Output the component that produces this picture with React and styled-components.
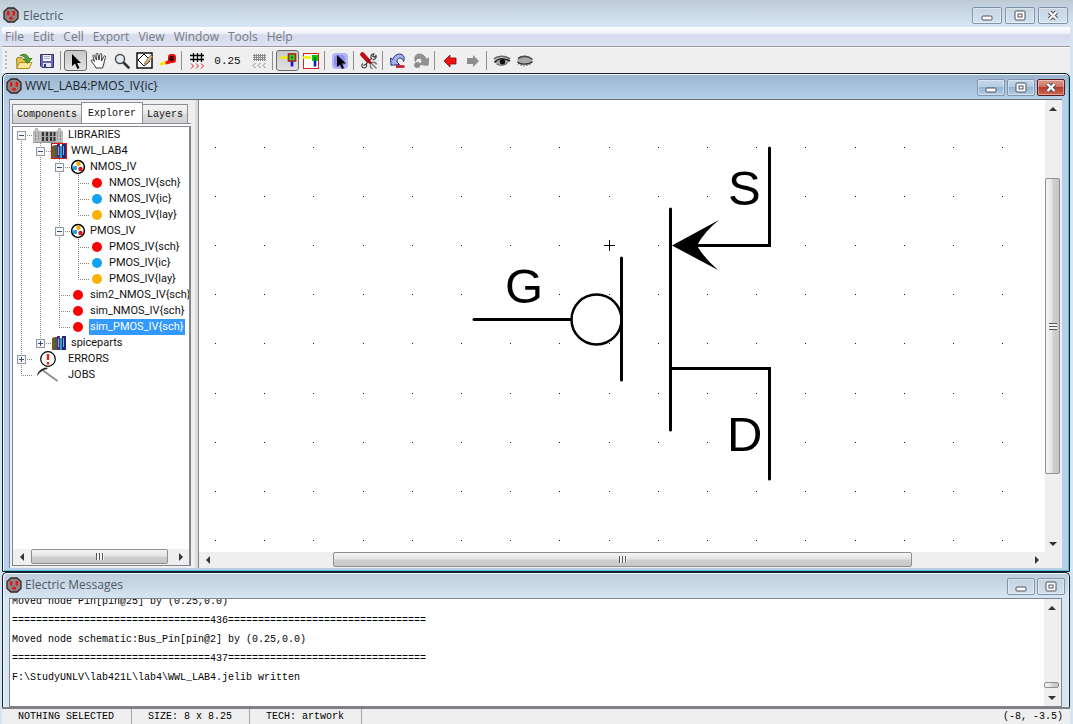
import React, { useState } from "react";
import styled, { createGlobalStyle, css } from "styled-components";

const GlobalStyle = createGlobalStyle`
  * {
    box-sizing: border-box;
  }
  body {
    margin: 0;
    font-family: "Open Sans", "Noto Sans", sans-serif;
    font-size: 12px;
  }
  button {
    font: inherit;
    color: inherit;
    padding: 0;
    margin: 0;
  }
`;

const mono = css`
  font-family: "Liberation Mono", monospace;
  font-size: 10px;
`;

const Desktop = styled.div`
  display: flex;
  flex-direction: column;
  height: 100vh;
  min-height: 480px;
  padding: 0 3px 0 2px;
  overflow: hidden;
  background: #d6e4f2;
`;

const AppTitle = styled.header`
  display: flex;
  align-items: center;
  gap: 4px;
  height: 27px;
  margin: 0 -3px 0 -2px;
  padding: 3px 5px 0 3px;
  color: #4d5a66;
  background: linear-gradient(#becbd7, #d9e7f4);
`;

const TitleText = styled.h1`
  flex: 1;
  margin: 0;
  font-size: 12px;
  font-weight: normal;
  white-space: nowrap;
`;

const MenuBar = styled.nav`
  display: flex;
  align-items: center;
  gap: 9px;
  height: 20px;
  padding: 0 3px;
  border-bottom: 1px solid #99999f;
  background: linear-gradient(#fdfeff, #f0f3f9 30%, #d5dbed 45%, #dfe3f3);
  color: #777a80;
`;

const MenuItem = styled.button`
  border: 0;
  background: none;
  line-height: 18px;
`;

const ToolBar = styled.div`
  display: flex;
  align-items: center;
  height: 26px;
  padding-left: 3px;
  background: #efefef;
  border-top: 1px solid #f8f8f8;
`;

const Grip = styled.span`
  width: 2px;
  height: 20px;
  margin-right: 5px;
  background: repeating-linear-gradient(#b8b8b8 0 2px, #f6f6f6 2px 4px);
`;

const Tool = styled.button`
  display: flex;
  align-items: center;
  justify-content: center;
  width: 23px;
  height: 21px;
  border: 1px solid ${(p) => (p.$down ? "#6b6b6b" : "transparent")};
  border-radius: 3px;
  background: ${(p) => (p.$down ? "linear-gradient(#c9c9c9, #e2e2e2)" : "none")};

  svg {
    flex: none;
  }
`;

const Sep = styled.span`
  width: 1px;
  height: 19px;
  margin: 0 3px 0 2px;
  background: #8e8e8e;
`;

const GridSize = styled.span`
  ${mono}
  width: 39px;
  text-align: center;
  font-size: 11px;
  color: #111;
`;

const Frame = styled.section`
  display: flex;
  flex-direction: column;
  min-height: 0;
  flex: ${(p) => (p.$grow ? "1" : "none")};
  padding: 0 7px ${(p) => (p.$grow ? "3px" : "0")} 6px;
  border: 1px solid #10202c;
  border-bottom-width: ${(p) => (p.$grow ? "1px" : "0")};
  border-radius: 5px 5px 0 0;
  background: ${(p) =>
    p.$grow
      ? "linear-gradient(#9ab4cf, #b7d0e9 25px)"
      : "linear-gradient(#bfccd9, #d7e4f1 25px)"};
  box-shadow: inset 1px 1px 0 #f2f8fd,
    inset -1px -1px 0 ${(p) => (p.$grow ? "#55bfd4" : "#e4eef7")};
`;

const FrameTitle = styled.header`
  display: flex;
  align-items: center;
  gap: 3px;
  height: 25px;
  margin-left: -3px;
  margin-right: -3px;
  padding-bottom: 2px;
  color: ${(p) => (p.$active ? "#1c242c" : "#4d5a66")};
`;

const Controls = styled.div`
  display: flex;
  gap: ${(p) => (p.$wide ? "3px" : "2px")};
  padding-top: ${(p) => (p.$wide ? "0" : "4px")};
`;

const ControlButton = styled.button`
  display: flex;
  align-items: center;
  justify-content: center;
  width: ${(p) => (p.$wide ? "30px" : "28px")};
  height: 17px;
  border: 1px solid ${(p) => (p.$danger ? "#5e1720" : "#8094ab")};
  border-radius: 2px;
  box-shadow: inset 0 0 0 1px rgba(255, 255, 255, 0.4);
  background: ${(p) => {
    if (p.$danger) return "linear-gradient(#dd9a8c, #cf6d5b 50%, #b43c28 50%, #cc6a50)";
    if (p.$active) return "linear-gradient(#c3d7eb, #b4cbe3 50%, #98b4d2 50%, #b2cce6)";
    return "transparent";
  }};
`;

const Workspace = styled.div`
  display: flex;
  flex: 1;
  min-height: 0;
  border-top: 1px solid #66727f;
  border-left: 1px solid #7d8791;
  background: #efefef;
`;

const SidePanel = styled.aside`
  display: flex;
  flex-direction: column;
  flex: none;
  width: 185px;
  padding: 2px 4px 2px 2px;
`;

const TabRow = styled.div`
  display: flex;
  align-items: flex-end;
  height: 21px;
`;

const Tab = styled.button`
  ${mono}
  height: ${(p) => (p.$active ? "21px" : "19px")};
  padding: 0 ${(p) => (p.$active ? "6px" : "4px")};
  border: 1px solid #8b8e94;
  border-bottom: 0;
  margin-left: -1px;
  color: #111;
  background: ${(p) =>
    p.$active ? "#fff" : "linear-gradient(#f3f3f3, #e9e9e9 50%, #dadada 50%, #d2d2d2)"};

  &:first-child {
    margin-left: 0;
  }
`;

const TabPane = styled.div`
  display: flex;
  flex-direction: column;
  flex: 1;
  min-height: 0;
  padding-top: 2px;
  border-top: 1px solid #8b8e94;
  background: #fff;
`;

const TreeBox = styled.div`
  display: flex;
  flex-direction: column;
  flex: 1;
  min-height: 0;
  border: 1px solid #828790;
  border-right-width: 2px;
  background: #fff;
`;

const TreeList = styled.ul`
  flex: 1;
  min-height: 0;
  margin: 0;
  padding: 0;
  overflow: hidden;
  list-style: none;
`;

const TreeRow = styled.li`
  display: flex;
  align-items: center;
  height: 16px;
  font-family: Roboto, "Liberation Sans", sans-serif;
  font-size: 11px;
  white-space: nowrap;
  color: #111;

  svg {
    flex: none;
  }
`;

const TreeLabel = styled.span`
  margin-left: 3px;
  padding: 0 1px;
  line-height: 16px;
  color: ${(p) => (p.$selected ? "#fff" : "inherit")};
  background: ${(p) => (p.$selected ? "#3399ff" : "none")};
`;

const Splitter = styled.div`
  flex: none;
  width: 3px;
  background: #dcdcdc;
`;

const CanvasBox = styled.main`
  display: grid;
  grid-template-columns: 1fr 17px;
  grid-template-rows: 1fr 16px;
  flex: 1;
  min-width: 0;
  border-left: 1px solid #7d8791;
  background: #efefef;
`;

const Schematic = styled.svg`
  width: 100%;
  height: 100%;
  min-height: 0;
  background: #fff;
  font-family: "Liberation Sans", sans-serif;
  font-size: 49px;
`;

const BarTrack = styled.div`
  display: flex;
  flex: none;
  flex-direction: ${(p) => (p.$vertical ? "column" : "row")};
  align-items: center;
  min-width: 0;
  min-height: 0;
  ${(p) => (p.$vertical ? "width: 17px" : "height: 16px")};
  padding: ${(p) => (p.$vertical ? "0 2px 0 0" : "0 0 1px")};
  background: #efefef;
`;

const BarArrow = styled.button`
  display: flex;
  align-items: center;
  justify-content: center;
  flex: none;
  width: 17px;
  height: 17px;
  border: 0;
  background: none;
`;

const BarSpace = styled.span`
  flex: ${(p) => p.$size} 1 0;
`;

const BarThumb = styled.div`
  display: flex;
  align-items: center;
  justify-content: center;
  flex: ${(p) => p.$size} 1 0;
  align-self: stretch;
  min-height: 6px;
  border: 1px solid #8f8f8f;
  border-radius: 2px;
  background: linear-gradient(
    ${(p) => (p.$vertical ? "to right" : "to bottom")},
    #f5f5f5,
    #e4e4e4 45%,
    #cfcfcf 55%,
    #c6c6c6
  );
`;

const Grooves = styled.span`
  width: 8px;
  height: 7px;
  background: repeating-linear-gradient(
    ${(p) => (p.$vertical ? "to bottom" : "to right")},
    #555 0 1px,
    #f4f4f4 1px 3px
  );
`;

const MessageBox = styled.div`
  display: flex;
  height: 109px;
  border: 1px solid #7d8791;
  background: #fff;
`;

const MessageLog = styled.div`
  ${mono}
  display: flex;
  flex-direction: column;
  justify-content: flex-end;
  flex: 1;
  min-width: 0;
  padding: 0 2px 19px;
  overflow: hidden;
  line-height: 19px;
  white-space: pre;
  color: #000;
`;

const MessageLine = styled.div`
  flex: none;
  height: 19px;
`;

const StatusBar = styled.footer`
  ${mono}
  display: flex;
  flex: none;
  height: 17px;
  border-top: 2px solid #7f7f7f;
  background: #efefef;
  color: #000;
  line-height: 16px;
`;

const StatusCell = styled.div`
  padding: 0 17px 0 16px;
  border-right: 1px solid #a6a6a6;
  white-space: pre;

  &:last-child {
    margin-left: auto;
    padding: 0 7px;
    border-right: 0;
  }
`;

/* ---------- icons ---------- */

const Outlet = () => (
  <svg width="16" height="16" viewBox="0 0 16 16">
    <path
      d="M5 1h6l4 3.500v7L11 15H5l-4-3.500v-7z"
      fill="#8f8484"
      stroke="#352424"
      strokeWidth="1.300"
    />
    <path d="M4 4h2.400v4.500H4zM9.600 4H12v4.500H9.600zM6 12.500V11l1-1.200h2L10 11v1.500z" fill="#e8141c" />
  </svg>
);

const MinIcon = () => (
  <svg width="12" height="11" viewBox="0 0 12 11">
    <rect x="1" y="6" width="10" height="4" rx="1" fill="#fff" stroke="#4b535e" />
  </svg>
);

const MaxIcon = () => (
  <svg width="12" height="11" viewBox="0 0 12 11">
    <rect x="1" y="1" width="10" height="9" rx="1" fill="#fff" stroke="#4b535e" />
    <rect x="4" y="4" width="4" height="3" fill="#fff" stroke="#4b535e" />
  </svg>
);

const CloseIcon = () => (
  <svg width="12" height="11" viewBox="0 0 12 11">
    <path d="M2.500 2l7 7M9.500 2l-7 7" stroke="#4b535e" strokeWidth="4.400" />
    <path d="M2.500 2l7 7M9.500 2l-7 7" stroke="#fff" strokeWidth="2.400" />
  </svg>
);

const OpenIcon = () => (
  <svg width="18" height="18" viewBox="0 0 18 18">
    <path d="M1.500 7l1-1.500h4L8 7.500h6v8.500h-12z" fill="#e8c14c" stroke="#94741c" strokeWidth=".9" />
    <path d="M4.500 10.500h12.500l-3 6H1.500z" fill="#fbe795" stroke="#a98322" strokeWidth=".9" />
    <path
      d="M5 3.500C9 1 13 2.500 13.800 6.500H17L12.500 11.500 8.500 7h2.300C10.300 5 8 3.800 5 3.500z"
      fill="#4da232"
      stroke="#2d6a1a"
      strokeWidth=".7"
    />
  </svg>
);

const SaveIcon = () => (
  <svg width="16" height="16" viewBox="0 0 16 16">
    <path d="M1.500 1.500h13v13H3l-1.500-1.500z" fill="#6668b4" stroke="#2f3078" />
    <rect x="4" y="2" width="8" height="6" fill="#f3f3fb" />
    <path d="M5 3.500h6M5 5.500h6" stroke="#a5a7cf" />
    <rect x="4" y="10" width="8" height="4" fill="#e3e4f2" />
    <rect x="5" y="11" width="2" height="3" fill="#2f3078" />
  </svg>
);

const CursorIcon = () => (
  <svg width="16" height="18" viewBox="0 0 16 18">
    <path d="M4 2v12l3-2.600 2.500 5.600 2-1-2.500-5h4z" fill="#000" />
  </svg>
);

const HandIcon = () => (
  <svg width="18" height="18" viewBox="0 0 18 18">
    <path
      d="M6 16c-1-3-4-5-4.500-7s2-1 3 .5L3 4.500c-.4-1.800 1.200-1.900 1.700-.3L6.500 8 6 2.700c0-1.800 1.900-1.800 2 0L9 8l.9-5.500c.3-1.500 2-1.200 1.900.3L11.500 9l2.300-4.500c.8-1.300 2.200-.6 1.700.8C14 9 14 13 12.500 16z"
      fill="#fff"
      stroke="#222"
      strokeWidth=".9"
    />
  </svg>
);

const ZoomIcon = () => (
  <svg width="16" height="16" viewBox="0 0 16 16">
    <path d="M9.500 9.500l5 5" stroke="#333" strokeWidth="2.600" strokeLinecap="round" />
    <circle cx="6" cy="6" r="4.500" fill="#e6edf2" stroke="#4b4b4b" strokeWidth="1.500" />
  </svg>
);

const OutlineIcon = () => (
  <svg width="17" height="17" viewBox="0 0 17 17">
    <rect x="1" y="1" width="15" height="15" fill="#fff" stroke="#000" strokeWidth="1.400" />
    <path d="M2 8l6-6M2 8l6 6 6-5M8 2l4 4" fill="none" stroke="#000" />
    <path d="M8.500 11l6-8 2 1.500-5 6.500-3 1z" fill="#dcb478" stroke="#8a7050" strokeWidth=".8" />
  </svg>
);

const MeasureIcon = () => (
  <svg width="18" height="18" viewBox="0 0 18 18">
    <path d="M1 12.500l7-2.500" stroke="#f4ea00" strokeWidth="2.600" />
    <path d="M6.500 9.500l4-2 1 4-5 1z" fill="#f0140c" />
    <rect x="9" y="2" width="8" height="9" rx="3" fill="#ee100c" />
    <path d="M11 4h3.500l.5 4-3 1.500-2-2z" fill="#300404" />
  </svg>
);

const GridIcon = ({ muted }) => (
  <svg width="16" height="18" viewBox="0 0 16 18">
    {muted ? (
      <path d="M2 3.500h13M2 5.500h13M2 7.500h13M3.500 2v7M5.500 2v7M7.500 2v7M9.500 2v7M11.500 2v7M13.500 2v7" stroke="#8a8a8a" />
    ) : (
      <path d="M1 3.500h14M1 7.500h14M4.500 1v9M8.500 1v9M12.500 1v9" stroke="#000" strokeWidth="1.300" />
    )}
    <path
      d={
        muted
          ? "M4.500 11L2 13.500 4.500 16M9.500 11L7 13.500 9.500 16M14.500 11L12 13.500l2.500 2.500"
          : "M2 11.500l2.500 2.500L2 16.500M7 11.500l2.500 2.500L7 16.500M12 11.500l2.500 2.500-2.500 2.500"
      }
      fill="none"
      stroke={muted ? "#888" : "#e01818"}
    />
  </svg>
);

const PinIcon = ({ boxed }) => (
  <svg width="18" height="18" viewBox="0 0 18 18">
    {boxed && <rect x="1.500" y="1.500" width="15" height="15" fill="#fff" stroke="#e02020" />}
    <path d="M1 5.500h8" stroke="#f0f000" strokeWidth="2.400" />
    <path d="M13 8v6.500" stroke="#1414d8" strokeWidth="2.600" />
    {boxed ? (
      <>
        <rect x="10" y="3" width="6" height="6" fill="#00d000" />
        <path d="M13 5v4" stroke="#055" strokeWidth="1.500" />
      </>
    ) : (
      <>
        <rect x="9.500" y="2" width="7" height="7" fill="#38d020" stroke="#b02018" strokeWidth="1.600" />
        <rect x="12" y="4.500" width="2" height="2" fill="#063" />
      </>
    )}
  </svg>
);

const SelectAreaIcon = () => (
  <svg width="18" height="18" viewBox="0 0 18 18">
    <rect x="1" y="1" width="16" height="16" rx="4" fill="#b4b4f8" />
    <rect x="3" y="3" width="11" height="12" rx="4" fill="#8e8eee" />
    <path d="M6 3v12l3-2.500 2 4.500 2-1-2-4.500h4z" fill="#000" />
  </svg>
);

const ToolsIcon = () => (
  <svg width="18" height="18" viewBox="0 0 18 18">
    <path
      d="M5 13l7-7M3 11.500c-2 1-1.500 4.500 1 4.500 2 0 3-1.500 2.500-3.500M3.500 13.500l1.500-1M11.500 6.500c-1.500-2.500 0-5 2.500-4.500l-1.200 2 1.700 1.200L16 3.500c1 2-1 4.500-3.500 4"
      fill="none"
      stroke="#444"
      strokeWidth="1.200"
    />
    <path d="M10 10l3 3M12 10.500c2-.5 4 0 4.500 2M10.500 12.500c-.5 2 0 3.500 2 4M13 13l3.500 3.500" stroke="#777" fill="none" strokeWidth="1.400" />
    <path d="M2.500 2.500l5 5.500" stroke="#c01018" strokeWidth="4.600" strokeLinecap="round" />
    <path d="M7 7.500l4 4" stroke="#a80c14" strokeWidth="2.600" />
  </svg>
);

const UndoIcon = ({ muted }) => (
  <svg width="18" height="18" viewBox="0 0 18 18">
    <g transform={muted ? "translate(18 0) scale(-1 1)" : undefined}>
      <path
        d="M1.500 6l2.300 1.500C5 3.500 8.500 1.500 12 2.200c3 .8 4 4.300 2.500 7.300C14 7 12.500 6 10.500 6.200 9 6.500 8 8 8 10l2.500 2.500-8.500.800z"
        fill={muted ? "#929292" : "#a3b0ea"}
        stroke={muted ? "#8a8a8a" : "#2b3384"}
      />
      {muted ? (
        <path d="M10 11c2-2 6-1 6 2s-4 4-6 2z" fill="#8c8c8c" />
      ) : (
        <path d="M7 14.500h8.500" stroke="#c41420" strokeWidth="2.600" />
      )}
    </g>
  </svg>
);

const HistoryArrow = ({ forward }) => (
  <svg width="14" height="14" viewBox="0 0 14 14">
    {forward ? (
      <path d="M13 7L7 1v3H1v6h6v3z" fill="#8d8d8d" />
    ) : (
      <path d="M1 7l6-6v3h6v6H7v3z" fill="#f01010" stroke="#7a0c0c" strokeWidth=".8" />
    )}
  </svg>
);

const EyeIcon = ({ closed }) => (
  <svg width="18" height="14" viewBox="0 0 18 14">
    {closed ? (
      <>
        <path d="M1 7c1-4 6-5.500 10-4.500 3 .6 5 2 5.500 3.500-1 4-12 6-15.500 1z" fill="#a9a9a9" />
        <path d="M2 4.500C6 1.500 12 1.500 16.500 5.500" fill="none" stroke="#4b4b4b" strokeWidth="1.600" />
        <path d="M1.500 8c3 3 11.500 3 15-.5" fill="none" stroke="#333" strokeWidth="1.300" />
        <path d="M3 9l-1 1.500M5.500 10l-.5 2M8 10.500v2M10.500 10.500l.5 1.500M13 9.500l1 1.500" fill="none" stroke="#555" />
      </>
    ) : (
      <>
        <path d="M1 5C5 1.500 12 1.500 17 5" fill="none" stroke="#666" strokeWidth="1.800" />
        <path d="M2 8.500c3-4.500 9-4.500 14.500-1.500-3 5-9.500 5.500-14.500 1.500z" fill="#a6a6a6" />
        <path d="M1.500 8.500C5 4 11 4 17 7" fill="none" stroke="#222" strokeWidth="1.700" />
        <path d="M3.500 10c4 2 8 1.500 11-1" fill="none" stroke="#555" />
        <circle cx="9.500" cy="7.800" r="2.700" fill="#0c0c0c" />
      </>
    )}
  </svg>
);

const ArrowGlyph = ({ dir }) => {
  const d = {
    up: "M0 6l4-4 4 4z",
    down: "M0 2l4 4 4-4z",
    left: "M6 0L2 4l4 4z",
    right: "M2 0l4 4-4 4z",
  }[dir];
  return (
    <svg width="8" height="8" viewBox="0 0 8 8">
      <path d={d} fill="#333" />
    </svg>
  );
};

const BooksIcon = ({ current }) => (
  <svg width="16" height="16" viewBox="0 0 16 16">
    <path d="M1 3l3-1v13H1z" fill="#7a5a1c" />
    <path d="M4 2h2v13H4z" fill="#2c6a4c" />
    <path d="M6 1h3v14H6z" fill="#5a2a8c" />
    <path d="M9 3h2v12H9z" fill="#2aa0c4" />
    <path d="M11 1h4v14h-4z" fill="#1c2870" />
    <path d="M7.500 4v8M12.500 3v9" stroke="#8ca8dc" />
    {current && <rect x=".500" y=".500" width="15" height="15" fill="none" stroke="#e01414" />}
  </svg>
);

const LibraryIcon = () => (
  <svg width="32" height="16" viewBox="0 0 32 16">
    <path d="M1 4l2-1V1h3v2l2 1h16l2-1V1h3v2l2 1v11H1z" fill="#bdbdbd" />
    <path d="M9 5h14v10H9z" fill="#a2a2a2" />
    <path d="M3.500 5v9M6.500 5v9M25.500 5v9M28.500 5v9" stroke="#8f8f8f" strokeDasharray="2 1" />
    <path d="M11 5v10M15 5v10M19 5v10M22.500 5v10" stroke="#333" strokeWidth="2" strokeDasharray="4 1" />
    <path d="M1 15.500h30" stroke="#999" />
  </svg>
);

const GroupIcon = () => (
  <svg width="16" height="16" viewBox="0 0 16 16">
    <circle cx="8" cy="8" r="6.400" fill="#fff" stroke="#000" strokeWidth="1.500" />
    <circle cx="8.500" cy="4.800" r="2.200" fill="#f5a800" />
    <circle cx="5" cy="9" r="2.200" fill="#10a4e8" />
    <circle cx="10.500" cy="10" r="2.200" fill="#e01010" />
  </svg>
);

const ErrorIcon = () => (
  <svg width="32" height="16" viewBox="0 0 32 16">
    <circle cx="16" cy="8" r="7.300" fill="#fff" stroke="#000" strokeWidth="1.200" />
    <path d="M16 3v6M16 11v2.500" stroke="#e02010" strokeWidth="2.400" />
  </svg>
);

const JobsIcon = () => (
  <svg width="32" height="16" viewBox="0 0 32 16">
    <path d="M11 3.500L25.500 14" stroke="#8b8f84" strokeWidth="1.800" />
    <path d="M5 9c.500-4 4-8 10-8.500l.500 1.500C11 2.500 8 5 5 9z" fill="#222" />
  </svg>
);

const viewColors = { sch: "#ff0000", ic: "#10a4f0", lay: "#ffb000" };

const ViewDot = ({ view }) => (
  <svg width="16" height="16" viewBox="0 0 16 16">
    <circle cx="8" cy="8" r="5" fill={viewColors[view]} />
  </svg>
);

/* ---------- explorer tree ---------- */

// guides: one letter per column
// "|" passes through, "r" is the root, "t" has a branch, "l" is the last branch
const nodes = [
  { label: "LIBRARIES", guides: "r", box: "-", icon: <LibraryIcon /> },
  { label: "WWL_LAB4", guides: "|t", box: "-", icon: <BooksIcon current /> },
  { label: "NMOS_IV", guides: "||t", box: "-", icon: <GroupIcon /> },
  { label: "NMOS_IV{sch}", guides: "|||t", icon: <ViewDot view="sch" /> },
  { label: "NMOS_IV{ic}", guides: "|||t", icon: <ViewDot view="ic" /> },
  { label: "NMOS_IV{lay}", guides: "|||l", icon: <ViewDot view="lay" /> },
  { label: "PMOS_IV", guides: "||t", box: "-", icon: <GroupIcon /> },
  { label: "PMOS_IV{sch}", guides: "|||t", icon: <ViewDot view="sch" /> },
  { label: "PMOS_IV{ic}", guides: "|||t", icon: <ViewDot view="ic" /> },
  { label: "PMOS_IV{lay}", guides: "|||l", icon: <ViewDot view="lay" /> },
  { label: "sim2_NMOS_IV{sch}", guides: "||t", icon: <ViewDot view="sch" /> },
  { label: "sim_NMOS_IV{sch}", guides: "||t", icon: <ViewDot view="sch" /> },
  { label: "sim_PMOS_IV{sch}", guides: "||l", icon: <ViewDot view="sch" /> },
  { label: "spiceparts", guides: "|l", box: "+", icon: <BooksIcon /> },
  { label: "ERRORS", guides: "t", box: "+", icon: <ErrorIcon /> },
  { label: "JOBS", guides: "l", icon: <JobsIcon /> },
];

const guideLines = {
  "|": "M8.500 0v16",
  r: "M8.500 8v8M8 8.500h11",
  t: "M8.500 0v16M8 8.500h11",
  l: "M8.500 0v9M8 8.500h11",
};

const Guide = ({ kind, box }) => (
  <svg width="19" height="16" viewBox="0 0 19 16">
    <path d={guideLines[kind]} stroke="#8a8a8a" strokeDasharray="1 1" />
    {box && (
      <>
        <rect x="4.500" y="4.500" width="8" height="8" fill="#f6f6f6" stroke="#8f98a3" />
        <path d={box === "+" ? "M6 8.500h5M8.500 6v5" : "M6 8.500h5"} stroke="#3b4f86" />
      </>
    )}
  </svg>
);

const Tree = () => {
  const [selected, setSelected] = useState("sim_PMOS_IV{sch}");
  return (
    <TreeList role="tree">
      {nodes.map(({ label, guides, box, icon }) => (
        <TreeRow
          key={label}
          role="treeitem"
          aria-selected={selected === label}
          onClick={() => setSelected(label)}
        >
          {guides.split("").map((kind, i) => (
            <Guide key={i} kind={kind} box={i === guides.length - 1 ? box : null} />
          ))}
          {icon}
          <TreeLabel $selected={selected === label}>{label}</TreeLabel>
        </TreeRow>
      ))}
    </TreeList>
  );
};

/* ---------- shared parts ---------- */

const ScrollBar = ({ vertical, before, thumb, after, plain }) => (
  <BarTrack $vertical={vertical}>
    <BarArrow aria-label={vertical ? "Scroll up" : "Scroll left"}>
      <ArrowGlyph dir={vertical ? "up" : "left"} />
    </BarArrow>
    <BarSpace $size={before} />
    <BarThumb $vertical={vertical} $size={thumb}>
      {!plain && <Grooves $vertical={vertical} />}
    </BarThumb>
    <BarSpace $size={after} />
    <BarArrow aria-label={vertical ? "Scroll down" : "Scroll right"}>
      <ArrowGlyph dir={vertical ? "down" : "right"} />
    </BarArrow>
  </BarTrack>
);

const WindowControls = ({ wide, active, closable }) => (
  <Controls $wide={wide}>
    <ControlButton $wide={wide} $active={active} aria-label="Minimize">
      <MinIcon />
    </ControlButton>
    <ControlButton $wide={wide} $active={active} aria-label="Maximize">
      <MaxIcon />
    </ControlButton>
    {closable && (
      <ControlButton $wide={wide} $danger={active} aria-label="Close">
        <CloseIcon />
      </ControlButton>
    )}
  </Controls>
);

const STEP = 49.2;
const columns = Array.from({ length: 17 }, (_, i) => Math.round(16 + i * STEP));
const rows = Array.from({ length: 9 }, (_, i) => Math.floor(47 + i * STEP));

const PmosIcon = () => (
  <Schematic role="img" aria-label="PMOS_IV icon">
    {rows.map((y) =>
      columns.map((x) => <rect key={`${x}-${y}`} x={x} y={y} width="1" height="1" fill="#222" />)
    )}
    <path d="M405 145.500h11M410.500 140v11" stroke="#000" />
    <g fill="none" stroke="#000" strokeWidth="3" strokeLinecap="round">
      <path d="M275 219.500h97" />
      <circle cx="397.500" cy="219.500" r="25" strokeWidth="2.500" />
      <path d="M422.500 158v122" />
      <path d="M471.500 109v221" />
      <path d="M570.500 48v97.500H490" />
      <path d="M472 268.500h98.500V379" />
    </g>
    <path d="M473 145.500L520 120Q505 132 498 145.500Q505 158 519 170z" />
    <text x="306" y="203">G</text>
    <text x="529" y="105">S</text>
    <text x="528" y="351">D</text>
  </Schematic>
);

const menus = ["File", "Edit", "Cell", "Export", "View", "Window", "Tools", "Help"];
const tabs = ["Components", "Explorer", "Layers"];
const rule = "=".repeat(33);
const messages = [
  "Moved node Pin[pin@25] by (0.25,0.0)",
  `${rule}436${rule}`,
  "Moved node schematic:Bus_Pin[pin@2] by (0.25,0.0)",
  `${rule}437${rule}`,
  "F:\\StudyUNLV\\lab421L\\lab4\\WWL_LAB4.jelib written",
];

const App = () => {
  return (
    <>
      <GlobalStyle />
      <Desktop>
        <AppTitle>
          <Outlet />
          <TitleText>Electric</TitleText>
          <WindowControls wide closable />
        </AppTitle>
        <MenuBar>
          {menus.map((m) => (
            <MenuItem key={m}>{m}</MenuItem>
          ))}
        </MenuBar>
        <ToolBar>
          <Grip />
          <Tool aria-label="Open library"><OpenIcon /></Tool>
          <Tool aria-label="Save library"><SaveIcon /></Tool>
          <Sep />
          <Tool $down aria-label="Select"><CursorIcon /></Tool>
          <Tool aria-label="Pan"><HandIcon /></Tool>
          <Tool aria-label="Zoom"><ZoomIcon /></Tool>
          <Tool aria-label="Outline edit"><OutlineIcon /></Tool>
          <Tool aria-label="Measure"><MeasureIcon /></Tool>
          <Sep />
          <Tool aria-label="Larger grid"><GridIcon /></Tool>
          <GridSize>0.25</GridSize>
          <Tool aria-label="Smaller grid"><GridIcon muted /></Tool>
          <Sep />
          <Tool $down aria-label="Select objects"><PinIcon /></Tool>
          <Tool aria-label="Select area"><PinIcon boxed /></Tool>
          <Sep />
          <Tool aria-label="Special select"><SelectAreaIcon /></Tool>
          <Sep />
          <Tool aria-label="Preferences"><ToolsIcon /></Tool>
          <Sep />
          <Tool aria-label="Undo"><UndoIcon /></Tool>
          <Tool aria-label="Redo"><UndoIcon muted /></Tool>
          <Sep />
          <Tool aria-label="Back"><HistoryArrow /></Tool>
          <Tool aria-label="Forward"><HistoryArrow forward /></Tool>
          <Sep />
          <Tool aria-label="Expand cell"><EyeIcon /></Tool>
          <Tool aria-label="Unexpand cell"><EyeIcon closed /></Tool>
        </ToolBar>

        <Frame $grow>
          <FrameTitle $active>
            <Outlet />
            <TitleText as="h2">WWL_LAB4:PMOS_IV{"{ic}"}</TitleText>
            <WindowControls active closable />
          </FrameTitle>
          <Workspace>
            <SidePanel>
              <TabRow role="tablist">
                {tabs.map((t) => (
                  <Tab key={t} role="tab" $active={t === "Explorer"} aria-selected={t === "Explorer"}>
                    {t}
                  </Tab>
                ))}
              </TabRow>
              <TabPane role="tabpanel">
                <TreeBox>
                  <Tree />
                  <ScrollBar before={1} thumb={138} after={4} />
                </TreeBox>
              </TabPane>
            </SidePanel>
            <Splitter />
            <CanvasBox>
              <PmosIcon />
              <ScrollBar vertical before={61} thumb={295} after={61} />
              <ScrollBar before={117} thumb={577} after={116} />
            </CanvasBox>
          </Workspace>
        </Frame>

        <Frame>
          <FrameTitle>
            <Outlet />
            <TitleText as="h2">Electric Messages</TitleText>
            <WindowControls />
          </FrameTitle>
          <MessageBox>
            <MessageLog>
              {messages.map((line) => (
                <MessageLine key={line}>{line}</MessageLine>
              ))}
            </MessageLog>
            <ScrollBar vertical plain before={66} thumb={1} after={1} />
          </MessageBox>
        </Frame>

        <StatusBar>
          <StatusCell>NOTHING SELECTED</StatusCell>
          <StatusCell>SIZE: 8 x 8.25</StatusCell>
          <StatusCell>TECH: artwork</StatusCell>
          <StatusCell>(-8, -3.5)</StatusCell>
        </StatusBar>
      </Desktop>
    </>
  );
};

export default App;
